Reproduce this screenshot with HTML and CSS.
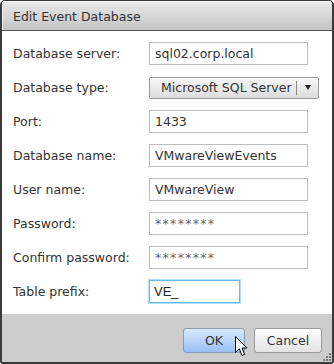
FILE: index.html
```html
<!DOCTYPE html>
<html>
  <head>
    <title>Edit Event Database</title>
    <link rel="stylesheet" href="styles.css">
  </head>
  <body>
    <div class="dialog">
      <div class="titlebar">Edit Event Database</div>
      <div class="form">
        <label>Database server:</label>
        <input class="field" type="text" value="sql02.corp.local">

        <label>Database type:</label>
        <div class="select">
          <span class="select-text">Microsoft SQL Server</span>
          <span class="select-arrow"></span>
        </div>

        <label>Port:</label>
        <input class="field" type="text" value="1433">

        <label>Database name:</label>
        <input class="field" type="text" value="VMwareViewEvents">

        <label>User name:</label>
        <input class="field" type="text" value="VMwareView">

        <label>Password:</label>
        <input class="field secret" type="text" value="********">

        <label>Confirm password:</label>
        <input class="field secret" type="text" value="********">

        <label>Table prefix:</label>
        <input class="field prefix" type="text" value="VE_">
      </div>
      <div class="footer">
        <button class="btn btn-ok">OK</button>
        <button class="btn">Cancel</button>
        <svg class="grip" width="8" height="8" viewBox="0 0 8 8">
          <rect x="6" y="0" width="2" height="2" fill="#777"/>
          <rect x="3" y="3" width="2" height="2" fill="#777"/>
          <rect x="6" y="3" width="2" height="2" fill="#777"/>
          <rect x="0" y="6" width="2" height="2" fill="#777"/>
          <rect x="3" y="6" width="2" height="2" fill="#777"/>
          <rect x="6" y="6" width="2" height="2" fill="#777"/>
        </svg>
      </div>
      <!-- mouse pointer resting on the OK button -->
      <svg class="cursor" width="13" height="21" viewBox="0 0 13 21">
        <path d="M0.5 0.5 L0.5 16.5 L4.3 12.8 L7 19.5 L9.6 18.4 L7 12 L12 12 Z" fill="#fff" stroke="#000" stroke-width="1" stroke-linejoin="miter"/>
      </svg>
    </div>
  </body>
</html>
```

FILE: styles.css
```css
body {
  margin: 0;
  font-family: "DejaVu Sans", Verdana, sans-serif;
  font-size: 12.5px;
  color: #333;
}
.dialog {
  position: relative;
  box-sizing: border-box;
  width: 334px;
  height: 364px;
  display: flex;
  flex-direction: column;
  background-color: #fff;
  border: 2px solid #3a3a3a;
  border-top-width: 1px;
  border-radius: 5px 5px 3px 3px;
  overflow: hidden;
}
.titlebar {
  height: 30px;
  box-sizing: border-box;
  padding: 1px 11px 0;
  line-height: 29px;
  color: #333;
  background: linear-gradient(#e9e9e9, #c4c4c4);
  border-bottom: 1px solid #555;
  box-shadow: inset 1px 1px 0 #f6f6f6;
}
.form {
  flex: 1;
  display: grid;
  grid-template-columns: 136px 1fr;
  grid-auto-rows: 23px;
  row-gap: 11px;
  align-items: center;
  padding: 11px 11px 0;
}
.field {
  box-sizing: border-box;
  width: 159px;
  height: 23px;
  margin: 0;
  padding: 0 5px;
  border: 1px solid #bdbdbd;
  font-family: "DejaVu Sans", Verdana, sans-serif;
  font-size: 12.5px;
  color: #333;
  outline: none;
}
.secret {
  color: #666;
  letter-spacing: 1.3px;
}
.prefix {
  width: 91px;
  padding: 0 4px;
  border: 1px solid #6fb6ea;
  box-shadow: 0 0 0 1px #ade0fb;
  font-family: "Liberation Sans", Arial, sans-serif;
  font-size: 13px;
  color: #222;
}
.select {
  box-sizing: border-box;
  width: 170px;
  height: 22px;
  display: flex;
  align-items: center;
  border: 1px solid #999;
  border-radius: 2px;
  background: linear-gradient(#f7f7f7, #dcdcdc);
}
.select-text {
  flex: 1;
  padding-left: 11px;
  border-right: 1px solid #8a8a8a;
  line-height: 14px;
}
.select-arrow {
  width: 21px;
  display: flex;
  justify-content: center;
}
.select-arrow::before {
  content: "";
  border-left: 3px solid transparent;
  border-right: 3px solid transparent;
  border-top: 5px solid #222;
}
.footer {
  position: relative;
  height: 48px;
  box-sizing: border-box;
  display: flex;
  justify-content: flex-end;
  align-items: flex-start;
  gap: 9px;
  padding: 14px 10px 0;
  background-color: #cdcdcd;
}
.btn {
  height: 25px;
  margin: 0;
  padding: 0;
  border: 1px solid #9a9a9a;
  border-radius: 3px;
  font-family: "DejaVu Sans", Verdana, sans-serif;
  font-size: 12.5px;
  color: #333;
  background: linear-gradient(#fdfdfd, #e4e4e4);
  width: 68px;
}
.btn-ok {
  width: 62px;
  border-color: #8c9cb2;
  background: linear-gradient(#dbe9fc, #98c0f6);
}
.grip {
  position: absolute;
  right: 1px;
  bottom: 1px;
}
.cursor {
  position: absolute;
  left: 233px;
  top: 335px;
}
```
